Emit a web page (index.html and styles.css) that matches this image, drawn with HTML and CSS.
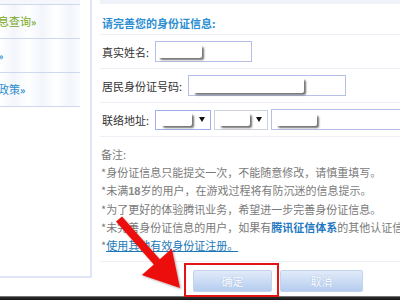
FILE: index.html
```html
<!DOCTYPE html>
<html lang="zh-CN">
<head>
    <meta charset="UTF-8">
    <meta name="viewport" content="width=device-width, initial-scale=1.0">
    <title>身份证信息</title>
    <link rel="stylesheet" href="styles.css">
</head>
<body>
    <div class="page">
        <div class="sidebar">
            <div class="side-top"></div>
            <div class="side-item active">身份信息查询<b>»</b></div>
            <div class="side-item">监护人<b>»</b></div>
            <div class="side-item">防沉迷政策<b>»</b></div>
        </div>

        <div class="main">
            <div class="main-top"></div>
            <div class="heading">请完善您的身份证信息:</div>

            <div class="row">
                <label class="label">真实姓名:</label>
                <div class="field name-field"><span class="mask name-mask"></span></div>
            </div>
            <div class="row">
                <label class="label">居民身份证号码:</label>
                <div class="field id-field"><span class="mask id-mask"></span></div>
            </div>
            <div class="row">
                <label class="label">联络地址:</label>
                <div class="select select-focus"><span class="mask sel-mask"></span><span class="caret"></span></div>
                <div class="select"><span class="mask sel-mask"></span><span class="caret"></span></div>
                <div class="field addr-field"><span class="mask addr-mask"></span></div>
            </div>

            <div class="notes">
                <p>备注:</p>
                <p>*身份证信息只能提交一次，不能随意修改，请慎重填写。</p>
                <p>*未满<span class="num">18</span>岁的用户，在游戏过程将有防沉迷的信息提示。</p>
                <p>*为了更好的体验腾讯业务，希望进一步完善身份证信息。</p>
                <p>*未完善身份证信息的用户，如果有<strong class="hl">腾讯征信体系</strong>的其他认证信息</p>
                <p>*<a href="#" class="link">使用其他有效身份证注册。</a></p>
            </div>

            <div class="actions">
                <button class="btn">确定</button>
                <button class="btn btn-cancel">取消</button>
            </div>
        </div>
    </div>
    <div class="bottom-bar"></div>

    <!-- annotation drawn over the page -->
    <div class="red-box"></div>
    <svg class="arrow" width="400" height="300" viewBox="0 0 400 300">
        <defs>
            <filter id="shade" x="-20%" y="-20%" width="140%" height="140%">
                <feDropShadow dx="1" dy="1" stdDeviation="1" flood-color="#000" flood-opacity="0.35"/>
            </filter>
        </defs>
        <polygon filter="url(#shade)" fill="#ec1111"
            points="116,221.6 153.8,264.5 141.8,275 180,288 171.8,248.6 159.8,259.2 122,216.4"/>
    </svg>
</body>
</html>
```

FILE: styles.css
```css
* {
    box-sizing: border-box;
}

body {
    margin: 0;
    width: 400px;
    height: 300px;
    overflow: hidden;
    position: relative;
    background: #fff;
    font-family: "Noto Sans CJK SC", "Liberation Sans", sans-serif;
    font-size: 11px;
    color: #444;
}

.page {
    display: flex;
    height: 296px;
    overflow: hidden;
}

/* left menu, cut off by the screenshot */
.sidebar {
    width: 92px;
    height: 278px;
    flex-shrink: 0;
    border-right: 2px solid #dfe5f4;
    border-bottom: 2px solid #dfe5f4;
}

.side-top {
    height: 5px;
    margin-right: 10px;
    border-bottom: 1px solid #cfd8ee;
    background: #f5f7fc;
}

.side-item {
    height: 34px;
    line-height: 33px;
    margin-right: 10px;
    border-bottom: 1px solid #cfd8ee;
    white-space: nowrap;
    overflow: hidden;
    text-indent: -35px;
    color: #2a8bcc;
    background: repeating-linear-gradient(90deg, #fff 0, #f2f5fb 14px, #fff 28px);
}

.side-item.active {
    color: #78a821;
}

.side-item b {
    font-size: 10px;
}

.main {
    flex: 1;
    margin-left: 8px;
    overflow: hidden;
}

.main-top {
    height: 4px;
    background: #eff2f9;
}

.heading {
    height: 31px;
    padding: 9px 0 0 2px;
    line-height: 20px;
    color: #2d8fd2;
    font-weight: bold;
    border-bottom: 1px solid #eceff6;
}

.row {
    display: flex;
    align-items: center;
    height: 34px;
    padding-left: 2px;
    border-bottom: 1px solid #eceff6;
    white-space: nowrap;
}

.label {
    margin-right: 6px;
    color: #333;
}

.field,
.select {
    display: flex;
    align-items: center;
    flex-shrink: 0;
    height: 21px;
    border: 1px solid #b6bfe7;
    background: #fff;
}

.name-field { width: 97px; padding-left: 2px; }
.id-field { width: 158px; padding-left: 4px; }
.addr-field { width: 140px; padding-left: 4px; }

.select {
    height: 20px;
    margin-right: 3px;
    border-color: #cfd3da;
}

.select-focus {
    width: 56px;
    padding-left: 5px;
    border-color: #9fb1e8;
}

.select:not(.select-focus) {
    width: 54px;
    padding-left: 4px;
}

.caret {
    margin-left: auto;
    margin-right: 5px;
    border-left: 3px solid transparent;
    border-right: 3px solid transparent;
    border-top: 5px solid #111;
}

/* white masks covering the typed values */
.mask {
    display: block;
    background: #fff;
    border-radius: 2px;
    box-shadow: 2px 2px 2px rgba(0, 0, 0, 0.55);
}

.name-mask { width: 44px; height: 13px; }
.id-mask { width: 111px; height: 15px; }
.sel-mask { width: 31px; height: 13px; }
.addr-mask { width: 41px; height: 12px; }

.notes {
    padding: 8px 0 7px 1px;
    border-bottom: 1px solid #eceff6;
    color: #7a7a7a;
    white-space: nowrap;
}

.notes p {
    margin: 0;
    line-height: 18px;
}

.num {
    font-family: "Liberation Sans", sans-serif;
    font-weight: bold;
    color: #888;
}

.hl {
    color: #1f78c0;
}

.link {
    color: #1a78b8;
    text-decoration: underline;
}

.actions {
    display: flex;
    gap: 8px;
    padding: 8px 0 0 93px;
}

.btn {
    width: 79px;
    height: 22px;
    padding: 0;
    border: 1px solid #c3d3ec;
    border-radius: 2px;
    background: linear-gradient(#e1ebf9, #b5cdef);
    color: #fff;
    font-family: inherit;
    font-size: 11px;
    text-shadow: 0 0 1px #8aa6cf;
}

.btn-cancel {
    width: 83px;
}

.bottom-bar {
    height: 4px;
    background: linear-gradient(#9a9a9a, #2a2a2a 35%, #151515);
}

.red-box {
    position: absolute;
    left: 184px;
    top: 263px;
    width: 95px;
    height: 34px;
    border: 2px solid #e41414;
}

.arrow {
    position: absolute;
    left: 0;
    top: 0;
    pointer-events: none;
}
```
